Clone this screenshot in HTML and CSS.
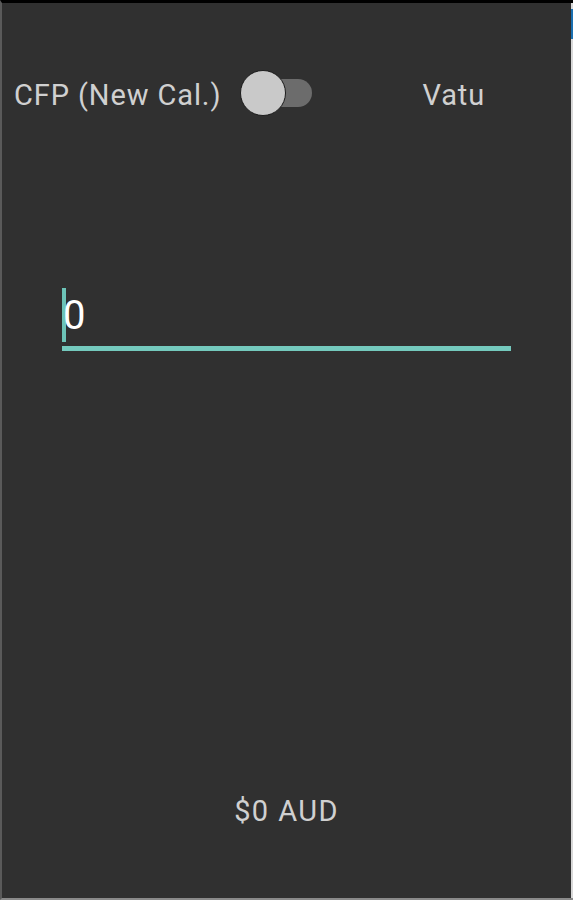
FILE: index.html
```html
<!DOCTYPE html>
<html>
<head>
<meta charset="utf-8">
<link rel="stylesheet" href="styles.css">
</head>
<body>
<div class="screen">
  <div class="frame">
    <div class="header">
      <span class="label from">CFP (New Cal.)</span>
      <div class="switch"><div class="track"></div><div class="thumb"></div></div>
      <span class="label to">Vatu</span>
    </div>
    <div class="field">
      <div class="value"><span class="caret"></span><span class="num">0</span></div>
      <div class="underline"></div>
    </div>
    <div class="spacer"></div>
    <div class="result">$0 AUD</div>
  </div>
  <div class="edge"><div class="edge-blue"></div></div>
</div>
</body>
</html>
```
FILE: styles.css
```css
html, body {
  margin: 0;
  padding: 0;
  background: #303030;
}
.screen {
  width: 573px;
  height: 900px;
  display: flex;
  box-sizing: border-box;
  border-top: 3px solid #000;
  border-bottom: 2px solid #8a8a8a;
  border-left: 2px solid #5a5a5a;
  font-family: Roboto, "Liberation Sans", sans-serif;
}
.frame {
  flex: 1;
  display: flex;
  flex-direction: column;
  background: #303030;
}
.edge {
  width: 2px;
  background: #d8d8d8;
}
.edge-blue {
  height: 30px;
  margin-top: 6px;
  background: #1a6fb0;
}
.header {
  display: flex;
  align-items: center;
  height: 48px;
  margin-top: 66px;
  padding-left: 12px;
}
.label {
  font-size: 29px;
  color: #d0d0d0;
  letter-spacing: 0.9px;
  position: relative;
  top: 2px;
}
.switch {
  position: relative;
  width: 72px;
  height: 48px;
  margin-left: 19px;
}
.track {
  position: absolute;
  left: 24px;
  top: 10px;
  width: 48px;
  height: 28px;
  border-radius: 14px;
  background: #6c6c6c;
}
.thumb {
  position: absolute;
  left: 0;
  top: 1px;
  width: 44px;
  height: 44px;
  border-radius: 50%;
  background: #c9c9c9;
  border: 1px solid #1c1c1c;
}
.to {
  margin-left: 110px;
}
.field {
  margin-top: 171px;
  margin-left: 60px;
  width: 449px;
}
.value {
  display: flex;
  align-items: center;
  height: 54px;
}
.caret {
  width: 4px;
  height: 54px;
  background: #6cc3b7;
}
.num {
  font-size: 40px;
  color: #ffffff;
  margin-left: -3px;
}
.underline {
  height: 5px;
  background: #74c9bd;
  margin-top: 4px;
}
.spacer {
  flex: 1;
}
.result {
  text-align: center;
  font-size: 29px;
  color: #d0d0d0;
  letter-spacing: 1.4px;
  margin-bottom: 70px;
}
```
